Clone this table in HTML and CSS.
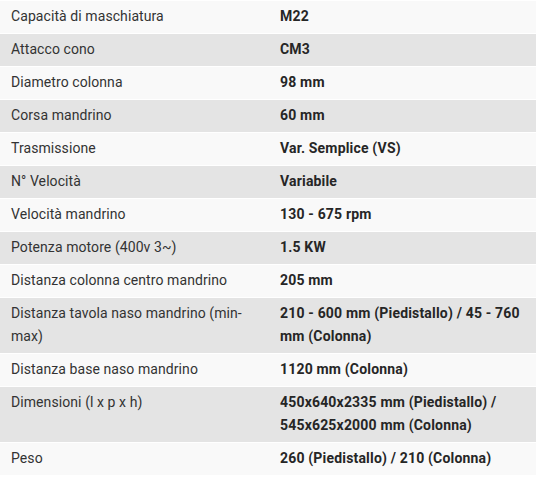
FILE: index.html
```html
<!DOCTYPE html>
<html lang="it">
<head>
<meta charset="utf-8">
<link rel="stylesheet" href="styles.css">
</head>
<body>
<table class="specs">
  <colgroup><col class="c-label"><col class="c-value"></colgroup>
  <tbody>
    <tr><td>Capacità di maschiatura</td><td>M22</td></tr>
    <tr><td>Attacco cono</td><td>CM3</td></tr>
    <tr><td>Diametro colonna</td><td>98 mm</td></tr>
    <tr><td>Corsa mandrino</td><td>60 mm</td></tr>
    <tr><td>Trasmissione</td><td>Var. Semplice (VS)</td></tr>
    <tr><td>N° Velocità</td><td>Variabile</td></tr>
    <tr><td>Velocità mandrino</td><td>130 - 675 rpm</td></tr>
    <tr><td>Potenza motore (400v 3~)</td><td>1.5 KW</td></tr>
    <tr><td>Distanza colonna centro mandrino</td><td>205 mm</td></tr>
    <tr><td>Distanza tavola naso mandrino (min-max)</td><td>210 - 600 mm (Piedistallo) / 45 - 760 mm (Colonna)</td></tr>
    <tr><td>Distanza base naso mandrino</td><td>1120 mm (Colonna)</td></tr>
    <tr><td>Dimensioni (l x p x h)</td><td>450x640x2335 mm (Piedistallo) / 545x625x2000 mm (Colonna)</td></tr>
    <tr><td>Peso</td><td>260 (Piedistallo) / 210 (Colonna)</td></tr>
  </tbody>
</table>
</body>
</html>
```

FILE: styles.css
```css
html, body {
  margin: 0;
  padding: 0;
  background: #ffffff;
}
body {
  font-family: Roboto, "Liberation Sans", sans-serif;
  font-size: 14px;
  color: #333333;
}
.specs {
  width: 536px;
  border-collapse: collapse;
  table-layout: fixed;
}
.c-label { width: 270px; }
.specs tr {
  border-top: 1px solid #ffffff;
  background: #f9f9f9;
}
.specs tr:nth-child(even) {
  background: #e4e4e4;
}
.specs td {
  padding: 4px 10px 5px 11px;
  line-height: 23px;
  vertical-align: top;
  letter-spacing: 0.08px;
}
.specs td + td {
  padding-left: 10px;
  font-weight: 700;
  color: #262626;
  letter-spacing: 0.18px;
}
```
